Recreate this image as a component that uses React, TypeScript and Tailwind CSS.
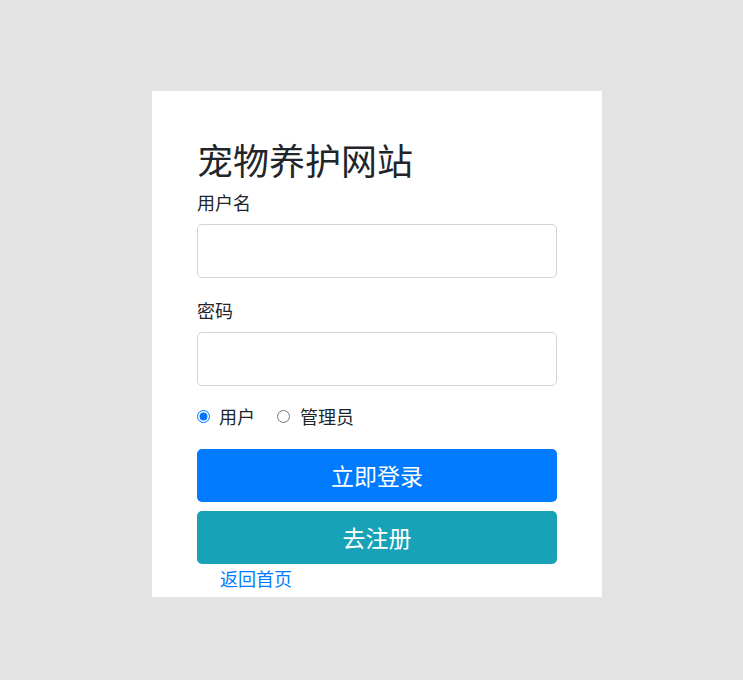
import React, { useState } from "react";

const App = () => {
  const [role, setRole] = useState("user");

  return (
    <div
      className="min-h-[680px] w-full bg-[#e3e3e3] pt-[91px]"
      style={{ fontFamily: '"Noto Sans CJK SC", "Noto Sans", sans-serif' }}
    >
      <div className="ml-[152px] w-[450px] bg-white px-[45px] pt-[47px] pb-[7px] text-[#212529]">
        {/* Title */}
        <h1 className="text-[36px] leading-[43px] font-normal">宠物养护网站</h1>

        {/* Username */}
        <label className="mt-[9px] block text-[18px] leading-[24px]">用户名</label>
        <input
          type="text"
          className="mt-[10px] block h-[54px] w-full rounded-[5px] border border-[#ced4da] px-3 outline-none"
        />

        {/* Password */}
        <label className="mt-[20px] block text-[18px] leading-[24px]">密码</label>
        <input
          type="password"
          className="mt-[10px] block h-[54px] w-full rounded-[5px] border border-[#ced4da] px-3 outline-none"
        />

        {/* Role */}
        <div className="mt-[18px] flex items-center text-[18px] leading-[24px]">
          <label className="flex items-center">
            <input
              type="radio"
              name="role"
              checked={role === "user"}
              onChange={() => setRole("user")}
              className="m-0 h-[13px] w-[13px] accent-[#0075ff]"
            />
            <span className="ml-[9px]">用户</span>
          </label>
          <label className="ml-[22px] flex items-center">
            <input
              type="radio"
              name="role"
              checked={role === "admin"}
              onChange={() => setRole("admin")}
              className="m-0 h-[13px] w-[13px] accent-[#0075ff]"
            />
            <span className="ml-[10px]">管理员</span>
          </label>
        </div>

        {/* Buttons */}
        <button className="mt-[21px] block h-[53px] w-full rounded-[5px] bg-[#007bff] text-[23px] text-white">
          立即登录
        </button>
        <button className="mt-[9px] block h-[53px] w-full rounded-[5px] bg-[#17a2b8] text-[23px] text-white">
          去注册
        </button>

        <a href="#" className="mt-[2px] ml-[23px] block w-fit text-[18px] leading-[24px] text-[#007bff]">
          返回首页
        </a>
      </div>
    </div>
  );
};

export default App;
